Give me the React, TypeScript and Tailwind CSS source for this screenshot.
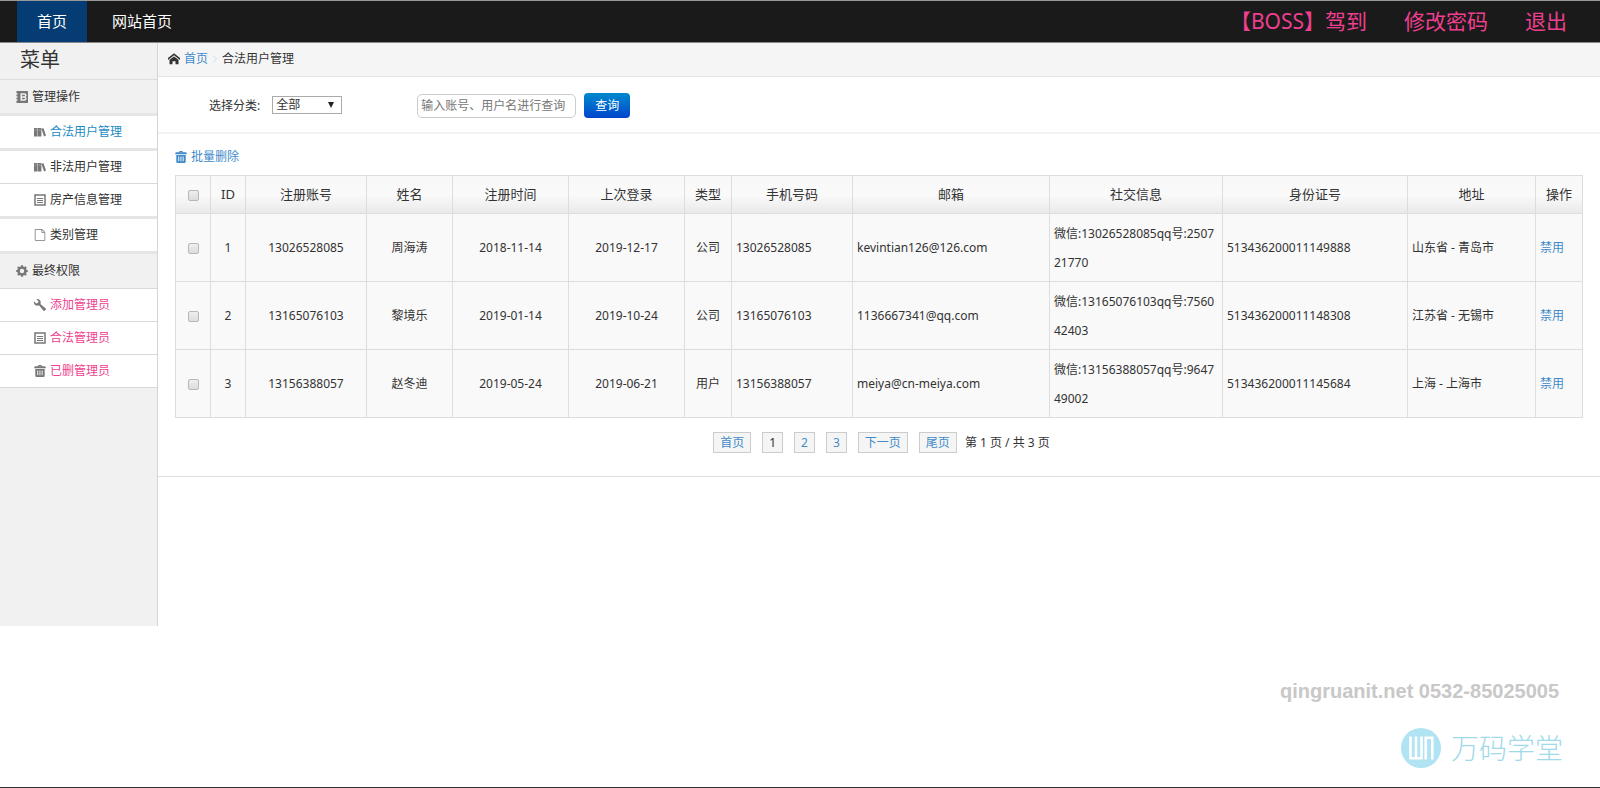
import type { ReactNode } from "react";
import { ImHome, ImFileEmpty, ImWrench } from "react-icons/im";
import { BsGearFill } from "react-icons/bs";

type User = {
  id: number;
  account: string;
  name: string;
  registered: string;
  lastLogin: string;
  kind: string;
  social: string;
  email: string;
  idCard: string;
  address: string;
};

const users: User[] = [
  { id: 1, account: "13026528085", name: "周海涛", registered: "2018-11-14", lastLogin: "2019-12-17", kind: "公司", email: "kevintian126@126.com", social: "微信:13026528085qq号:250721770", idCard: "513436200011149888", address: "山东省 - 青岛市" },
  { id: 2, account: "13165076103", name: "黎境乐", registered: "2019-01-14", lastLogin: "2019-10-24", kind: "公司", email: "1136667341@qq.com", social: "微信:13165076103qq号:756042403", idCard: "513436200011148308", address: "江苏省 - 无锡市" },
  { id: 3, account: "13156388057", name: "赵冬迪", registered: "2019-05-24", lastLogin: "2019-06-21", kind: "用户", email: "meiya@cn-meiya.com", social: "微信:13156388057qq号:964749002", idCard: "513436200011145684", address: "上海 - 上海市" },
];

const headings = ["ID", "注册账号", "姓名", "注册时间", "上次登录", "类型", "手机号码", "邮箱", "社交信息", "身份证号", "地址", "操作"];

function AddressBookIcon() {
  return (
    <svg viewBox="0 0 16 16" className="size-3" aria-hidden="true">
      <path fill="currentColor" fillRule="evenodd" d="M1.5 0H15a1 1 0 0 1 1 1v14a1 1 0 0 1-1 1H1.500a1 1 0 0 1-1-1v-2H2v-2H.5V9H2V7H.5V5H2V3H.500V1a1 1 0 0 1 1-1ZM6 3v10h5.500a2.700 2.700 0 0 0 1.300-5A2.700 2.700 0 0 0 11.500 3Zm2 2h3a1 1 0 0 1 0 2H8Zm0 4h3a1 1 0 0 1 0 2H8Z" />
    </svg>
  );
}

function BooksIcon() {
  return (
    <svg viewBox="0 0 12 12" className="size-3" aria-hidden="true">
      <path fill="currentColor" d="M0 2h3.600v8.500H0zM4 2h3.400v8.500H4zM7.500 3l1.900-.9L12 9.600l-2 .9z" />
      <path stroke="#fff" strokeOpacity=".6" strokeWidth=".6" d="M.8 4h2M4.800 4h2" />
    </svg>
  );
}

function ListIcon() {
  return (
    <svg viewBox="0 0 12 12" className="size-3" fill="none" stroke="currentColor" aria-hidden="true">
      <rect x="1" y="1" width="10" height="10" strokeWidth="1.500" />
      <path d="M3 4.500h6M3 6.500h6M3 8.500h6" />
    </svg>
  );
}

function TrashIcon() {
  return (
    <svg viewBox="0 0 12 12" className="size-3" aria-hidden="true">
      <path fill="currentColor" fillRule="evenodd" d="M4 1.200A1.200 1.200 0 0 1 5.200 0h1.600A1.200 1.200 0 0 1 8 1.200h3.200l.8 2H0l.8-2ZM5 1.200h2V.9H5ZM1.300 4h9.400v6.800A1.200 1.200 0 0 1 9.500 12h-7a1.200 1.200 0 0 1-1.200-1.200ZM3.300 5.500v4.800h.9V5.500Zm2.200 0v4.800h.9V5.500Zm2.200 0v4.800h.9V5.500Z" />
    </svg>
  );
}

function MenuHeading({ icon, children }: { icon: ReactNode; children: ReactNode }) {
  return (
    <h3 className="flex h-[33px] items-center gap-1 pl-4 text-[#333]">
      <span className="text-[#777]">{icon}</span>
      {children}
    </h3>
  );
}

function MenuLink({ icon, color, line, children }: { icon: ReactNode; color: string; line: string; children: ReactNode }) {
  return (
    <li className={line}>
      <a href="#" className="flex h-8 items-center gap-1 bg-white pl-[34px]">
        <span className="text-[#777]">{icon}</span>
        <span className={color}>{children}</span>
      </a>
    </li>
  );
}

const thick = "border-b-3 border-[#e5e5e5]";
const thin = "border-b border-[#d9d9d9]";

function PageLink({ children, current = false }: { children: ReactNode; current?: boolean }) {
  return (
    <a href="#" className={`border border-[#ccc] bg-[#f5f5f5] px-[6px] leading-[19px] ${current ? "text-[#333]" : "text-[#428bca]"}`}>
      {children}
    </a>
  );
}

function RowCheckbox({ label }: { label: string }) {
  return (
    <input
      type="checkbox"
      aria-label={label}
      className="mx-auto mt-[2px] block size-[11px] appearance-none rounded-[2px] border border-[#b8b8b8] bg-linear-to-b from-[#eee] to-[#ddd]"
    />
  );
}

export default function App() {
  return (
    <div className="flex min-h-screen flex-col bg-white font-['Noto_Sans','Noto_Sans_CJK_SC',sans-serif] text-xs text-[#333]">
      <header className="flex h-[43px] justify-between border-t border-b border-t-[#999] border-b-[#888] bg-[#1a1a1a] pr-[33px] pl-[17px]">
        <nav className="flex gap-[5px] text-[15px] leading-[41px] text-white">
          <a href="#" className="bg-[#043c73] px-5">首页</a>
          <a href="#" className="px-5">网站首页</a>
        </nav>
        <nav className="flex gap-[37px] text-[21px] leading-[41px] text-[#ee3f90]">
          <a href="#">【BOSS】驾到</a>
          <a href="#">修改密码</a>
          <a href="#">退出</a>
        </nav>
      </header>

      <div className="flex min-h-[583px]">
        <aside className="w-[158px] shrink-0 border-r border-[#d5d5d5] bg-[#f1f1f1]">
          <h2 className="h-[37px] border-b border-[#ddd] pl-5 text-xl leading-[34px]">菜单</h2>
          <div className={thick}>
            <MenuHeading icon={<AddressBookIcon />}>管理操作</MenuHeading>
          </div>
          <ul>
            <MenuLink icon={<BooksIcon />} color="text-[#1b8ac4]" line={thick}>合法用户管理</MenuLink>
            <MenuLink icon={<BooksIcon />} color="text-[#333]" line={thin}>非法用户管理</MenuLink>
            <MenuLink icon={<ListIcon />} color="text-[#333]" line={thick}>房产信息管理</MenuLink>
            <MenuLink icon={<ImFileEmpty />} color="text-[#333]" line={thick}>类别管理</MenuLink>
          </ul>
          <div className="border-b border-[#d9d9d9] pb-px">
            <MenuHeading icon={<BsGearFill />}>最终权限</MenuHeading>
          </div>
          <ul>
            <MenuLink icon={<ImWrench />} color="text-[#ee3f90]" line={thin}>添加管理员</MenuLink>
            <MenuLink icon={<ListIcon />} color="text-[#ee3f90]" line={thin}>合法管理员</MenuLink>
            <MenuLink icon={<TrashIcon />} color="text-[#ee3f90]" line={thin}>已删管理员</MenuLink>
          </ul>
        </aside>

        <main className="min-w-0 flex-1">
          <div className="flex h-[34px] items-center gap-1 border-b border-[#e5e5e5] bg-[#f5f5f5] pb-px pl-[10px]">
            <ImHome className="size-3" />
            <a href="#" className="text-[#428bca]">首页</a>
            <svg viewBox="0 0 6 10" className="h-2 w-[6px]" fill="none" stroke="#bcd3e4" aria-hidden="true">
              <path d="M1 1l4 4-4 4" />
            </svg>
            <span>合法用户管理</span>
          </div>

          <form className="flex h-[57px] items-center border-b-2 border-[#f2f2f2] pt-[2px] pl-[51px]">
            <label htmlFor="category" className="mr-3">选择分类:</label>
            <span className="relative mr-[75px] flex pb-px">
              <select id="category" className="h-[18px] w-[70px] appearance-none border border-[#aaa] bg-white pl-[3px] text-xs leading-4">
                <option>全部</option>
              </select>
              <svg viewBox="0 0 8 6" className="pointer-events-none absolute top-[6px] right-[7px] h-[6px] w-2" aria-hidden="true">
                <path d="M1 0h6L4 6z" fill="#222" />
              </svg>
            </span>
            <input type="text" aria-label="查询内容" placeholder="输入账号、用户名进行查询" className="mr-2 h-6 w-[159px] rounded-[5px] border border-[#ccc] px-[3px] text-xs placeholder:text-[#777]" />
            <button type="button" className="h-[25px] rounded bg-linear-to-b from-[#0088cc] to-[#0044cc] px-[11px] text-xs text-white">查询</button>
          </form>

          <section className="border-b border-[#ddd] pr-[17px] pb-[23px] pl-[17px]">
            <button type="button" className="flex h-[41px] items-center gap-1 pt-[5px] text-[#428bca]">
              <TrashIcon />
              批量删除
            </button>
            <table className="w-full table-fixed border-collapse border border-[#ddd] bg-[#f9f9f9]">
              <colgroup>
                <col className="w-[35px]" />
                <col className="w-[35px]" />
                <col className="w-[121px]" />
                <col className="w-[86px]" />
                <col className="w-[116px]" />
                <col className="w-[116px]" />
                <col className="w-[47px]" />
                <col className="w-[121px]" />
                <col className="w-[197px]" />
                <col className="w-[173px]" />
                <col className="w-[185px]" />
                <col className="w-[128px]" />
                <col className="w-[47px]" />
              </colgroup>
              <thead>
                <tr className="h-[38px] bg-linear-to-b from-[#f8f8f8] via-[#fafafa] to-[#e9e9e9]">
                  <th className="border border-[#ddd]">
                    <RowCheckbox label="全选" />
                  </th>
                  {headings.map((heading) => (
                    <th key={heading} className="border border-[#ddd] text-[13px] font-normal whitespace-nowrap">{heading}</th>
                  ))}
                </tr>
              </thead>
              <tbody>
                {users.map((user) => (
                  <tr key={user.id} className="h-[68px] leading-[29px] *:border *:border-[#ddd] *:px-1">
                    <td>
                      <RowCheckbox label={`选择 ${user.name}`} />
                    </td>
                    <td className="text-center">{user.id}</td>
                    <td className="text-center">{user.account}</td>
                    <td className="text-center">{user.name}</td>
                    <td className="text-center">{user.registered}</td>
                    <td className="text-center">{user.lastLogin}</td>
                    <td className="text-center">{user.kind}</td>
                    <td>{user.account}</td>
                    <td>{user.email}</td>
                    <td className="break-all">{user.social}</td>
                    <td>{user.idCard}</td>
                    <td>{user.address}</td>
                    <td><a href="#" className="text-[#428bca]">禁用</a></td>
                  </tr>
                ))}
              </tbody>
            </table>
            <nav className="mt-[14px] flex items-center justify-center gap-[11px] pl-[5px]">
              <PageLink>首页</PageLink>
              <PageLink current>1</PageLink>
              <PageLink>2</PageLink>
              <PageLink>3</PageLink>
              <PageLink>下一页</PageLink>
              <div className="flex items-center gap-2">
                <PageLink>尾页</PageLink>
                <span>第 1 页 / 共 3 页</span>
              </div>
            </nav>
          </section>
        </main>
      </div>

      <footer className="mt-auto flex flex-col items-end border-b border-[#333] pr-[37px] pb-[19px]">
        <p className="mr-1 mb-[23px] font-['Liberation_Sans',sans-serif] text-xl leading-7 font-bold text-[#c8c8c8]">qingruanit.net 0532-85025005</p>
        <div className="flex items-center gap-[10px] text-[#9fdaea]">
          <svg viewBox="0 0 40 40" className="size-10" aria-hidden="true">
            <circle cx="20" cy="20" r="20" fill="#b0e4f3" />
            <g fill="none" stroke="#fff" strokeWidth="2.600">
              <path d="M9.500 8.500v21.700h11V8.500M15 8.500v21.700" />
              <path d="M24.700 31.500V9.800h6.600v21.700" />
            </g>
          </svg>
          <span className="text-[28px] leading-10 font-light">万码学堂</span>
        </div>
      </footer>
    </div>
  );
}
